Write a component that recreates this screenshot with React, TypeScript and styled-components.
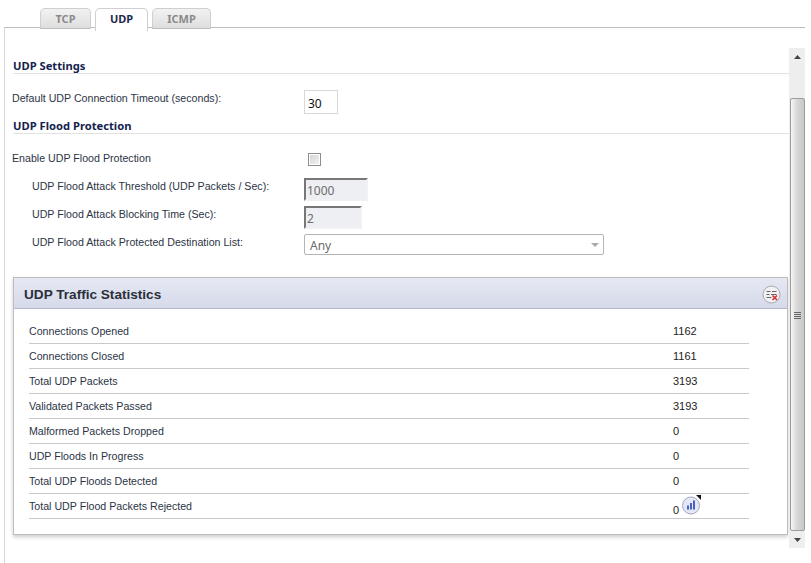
import React from "react";
import styled, { createGlobalStyle } from "styled-components";

const Global = createGlobalStyle`
  html, body { margin: 0; padding: 0; background: #fff; }
  body { width: 811px; height: 563px; overflow: hidden; font-family: "Liberation Sans", sans-serif; }
`;

const Page = styled.div`
  width: 811px; height: 563px; display: flex; flex-direction: column; padding: 8px 0 0 4px; box-sizing: border-box;
`;
const Tabs = styled.div`
  display: flex; gap: 4px; padding-left: 36px; height: 20px; position: relative; z-index: 1;
`;
const Tab = styled.div<{ $active?: boolean; $w: number }>`
  height: ${p => (p.$active ? 23 : 21)}px; box-sizing: border-box; width: ${p => p.$w}px;
  border: 1px solid #cfcfcf; border-bottom: ${p => (p.$active ? "0" : "1px solid #bcbcbc")};
  border-radius: 5px 5px 0 0;
  background: ${p => (p.$active ? "#fff" : "linear-gradient(#f2f2f2,#dedede)")};
  color: ${p => (p.$active ? "#1c2a4a" : "#8a8a8a")};
  font: bold 11px/20px "Noto Sans", sans-serif;
  text-align: center;
`;
const Frame = styled.div`
  flex: 1; display: flex; min-height: 0; border-top: 1px solid #bdbdbd; border-left: 1px solid #d6d6d6; margin-top: -1px; padding-top: 20px; align-items: flex-start;
  width: 801px; box-sizing: border-box;
`;
const Content = styled.div`
  width: 784px; flex: none; box-sizing: border-box; padding: 9px 0 0 8px;
  font-size: 10.65px; color: #2b3445;
`;
const SectionTitle = styled.div`
  height: 16px; color: #14224e; font: bold 11.2px/18px "Noto Sans", sans-serif; border-bottom: 1px solid #e2e2e2;
`;
const Form = styled.div`
  display: grid; grid-template-columns: 292px 1fr; align-items: center; margin-left: -1px;
`;
const Label = styled.div<{ $indent?: boolean; $h: number; $t: number }>`
  padding-left: ${p => (p.$indent ? 20 : 0)}px; height: ${p => p.$h}px; padding-top: ${p => p.$t}px; box-sizing: border-box; white-space: nowrap; line-height: 15px;
`;
const Field = styled.div<{ $h: number; $t: number }>`
  height: ${p => p.$h}px; box-sizing: border-box; padding-top: ${p => p.$t}px; display: flex; align-items: flex-start;
`;
const TextBox = styled.input`
  box-sizing: border-box; width: 34px; height: 24px; border: 1px solid #d8d8d8; padding: 3px 0 0 3px; margin: 0; color: #111; font: 12px "Noto Sans", sans-serif; background: #fff; outline: none;
`;
const InsetBox = styled.input<{ $w: number }>`
  box-sizing: border-box; width: ${p => p.$w}px; height: 23px; border: 2px solid; border-color: #777 #f1f1f4 #f1f1f4 #777; padding: 2px 0 0 1px; margin: 0; color: #6d6d6d; font: 12px "Noto Sans", sans-serif; background: #eeeff3; outline: none;
`;
const Check = styled.input.attrs({ type: "checkbox" })`
  appearance: none; width: 13px; height: 13px; margin: 0 0 0 4px; box-sizing: border-box; border: 1px solid #8e8e8e; background: linear-gradient(135deg,#d4d4d4,#f4f4f4); box-shadow: inset 0 0 0 1px #fff;
`;
const SelectBox = styled.div`
  box-sizing: border-box; width: 300px; height: 21px; border: 1px solid #b5b5b5; border-radius: 2px; padding: 0 0 0 5px; font: 12px/21px "Noto Sans", sans-serif; color: #6b6b6b; position: relative; background: #fff;
  &::after { content: ""; position: absolute; right: 4px; top: 8px; border: 4px solid transparent; border-top: 4px solid #aaa; border-bottom: 0; }
`;
const Panel = styled.section`
  width: 775px; height: 258px; box-sizing: border-box; border: 1px solid #bdbdbd; box-shadow: 0 2px 4px rgba(0,0,0,.2); background: #fff;
`;
const PanelHead = styled.header`
  height: 31px; box-sizing: border-box; border-bottom: 1px solid #b6bac4; background: linear-gradient(#e6e9f3,#d5daea); display: flex; align-items: center; justify-content: space-between; padding: 2px 6px 0 10px;
`;
const PanelTitle = styled.h2`
  margin: 0; font: bold 13.6px "Liberation Sans", sans-serif; color: #2b2f3a;
`;
const PanelBody = styled.div`
  padding: 10px 0 0 15px; width: 720px;
`;
const StatRow = styled.div`
  height: 25px; box-sizing: border-box; border-bottom: 1px solid #c9c9c9; display: grid; grid-template-columns: 644px 1fr; padding-top: 5px; line-height: 15px; color: #2b3445; position: relative;
`;
const Value = styled.span<{ $low?: boolean }>`
  color: #222; font-size: 11px; padding-top: ${p => (p.$low ? 4 : 0)}px;
`;
const Bar = styled.div`
  width: 16px; height: 500px; flex: none; background: #eee; display: flex; flex-direction: column; align-items: center; box-sizing: border-box;
`;
const BarEnd = styled.div`
  height: 17px; flex: none; width: 100%; display: flex; align-items: center; justify-content: center;
`;
const Thumb = styled.div`
  flex: 1; width: 15px; margin-top: 33px; box-sizing: border-box; border: 1px solid #9b9b9b; border-radius: 2px; background: linear-gradient(90deg,#f6f6f6,#d8d8d8 45%,#c8c8c8); display: flex; align-items: center; justify-content: center;
`;
const Grip = styled.div`
  width: 7px; height: 7px; background: repeating-linear-gradient(#666 0 1px, transparent 1px 2px);
  margin-top: 2px;
`;

const StatIcon = styled.svg`
  position: absolute; left: 653px; top: 1px;
`;

const Arrow = ({ up }: { up?: boolean }) => (
  <svg width="7" height="4" viewBox="0 0 7 4"><path d={up ? "M3.5 0L7 4H0Z" : "M0 0H7L3.5 4Z"} fill="#444" /></svg>
);

const stats: [string, string][] = [
  ["Connections Opened", "1162"],
  ["Connections Closed", "1161"],
  ["Total UDP Packets", "3193"],
  ["Validated Packets Passed", "3193"],
  ["Malformed Packets Dropped", "0"],
  ["UDP Floods In Progress", "0"],
  ["Total UDP Floods Detected", "0"],
];

export default function App() {
  return (
    <Page>
      <Global />
      <Tabs>
        <Tab $w={51}>TCP</Tab>
        <Tab $w={53} $active>UDP</Tab>
        <Tab $w={59}>ICMP</Tab>
      </Tabs>
      <Frame>
        <Content>
          <SectionTitle>UDP Settings</SectionTitle>
          <Form>
            <Label $h={43} $t={17}>Default UDP Connection Timeout (seconds):</Label>
            <Field $h={43} $t={16}><TextBox defaultValue="30" readOnly /></Field>
          </Form>
          <SectionTitle>UDP Flood Protection</SectionTitle>
          <Form>
            <Label $h={44} $t={17}>Enable UDP Flood Protection</Label>
            <Field $h={44} $t={19}><Check readOnly /></Field>
            <Label $indent $h={28} $t={1}>UDP Flood Attack Threshold (UDP Packets / Sec):</Label>
            <Field $h={28} $t={0}><InsetBox $w={64} defaultValue="1000" readOnly /></Field>
            <Label $indent $h={28} $t={1}>UDP Flood Attack Blocking Time (Sec):</Label>
            <Field $h={28} $t={0}><InsetBox $w={58} defaultValue="2" readOnly /></Field>
            <Label $indent $h={43} $t={1}>UDP Flood Attack Protected Destination List:</Label>
            <Field $h={43} $t={0}><SelectBox>Any</SelectBox></Field>
          </Form>
          <Panel>
            <PanelHead>
              <PanelTitle>UDP Traffic Statistics</PanelTitle>
              <svg width="19" height="19" viewBox="0 0 19 19">
                <circle cx="9.5" cy="9.5" r="8.5" fill="#f1f1f3" stroke="#a9a9ad" />
                <path d="M4.5 6.5h4M10 6.5h4.5M4.5 9.5h3M9 9.5h5.5M4.5 12.5h5" stroke="#666" strokeWidth="1" />
                <path d="M10.5 10.5l4.5 4.5M15 10.5l-4.5 4.5" stroke="#d8333a" strokeWidth="1.7" />
              </svg>
            </PanelHead>
            <PanelBody>
              {stats.map(([k, v]) => (
                <StatRow key={k}><span>{k}</span><Value>{v}</Value></StatRow>
              ))}
              <StatRow>
                <span>Total UDP Flood Packets Rejected</span>
                <Value $low>0</Value>
                <StatIcon width="19" height="20" viewBox="0 0 19 20">
                  <circle cx="9" cy="10.5" r="8.5" fill="#e4e7f6" stroke="#a5a9c0" />
                  <path d="M5 10.5h2v4H5zM8 8h2v6.5H8zM11 5.5h2v9h-2z" fill="#4a5fc0" />
                  <path d="M14 0h5v5z" fill="#111" />
                </StatIcon>
              </StatRow>
            </PanelBody>
          </Panel>
        </Content>
        <Bar>
          <BarEnd><Arrow up /></BarEnd>
          <Thumb><Grip /></Thumb>
          <BarEnd><Arrow /></BarEnd>
        </Bar>
      </Frame>
    </Page>
  );
}
